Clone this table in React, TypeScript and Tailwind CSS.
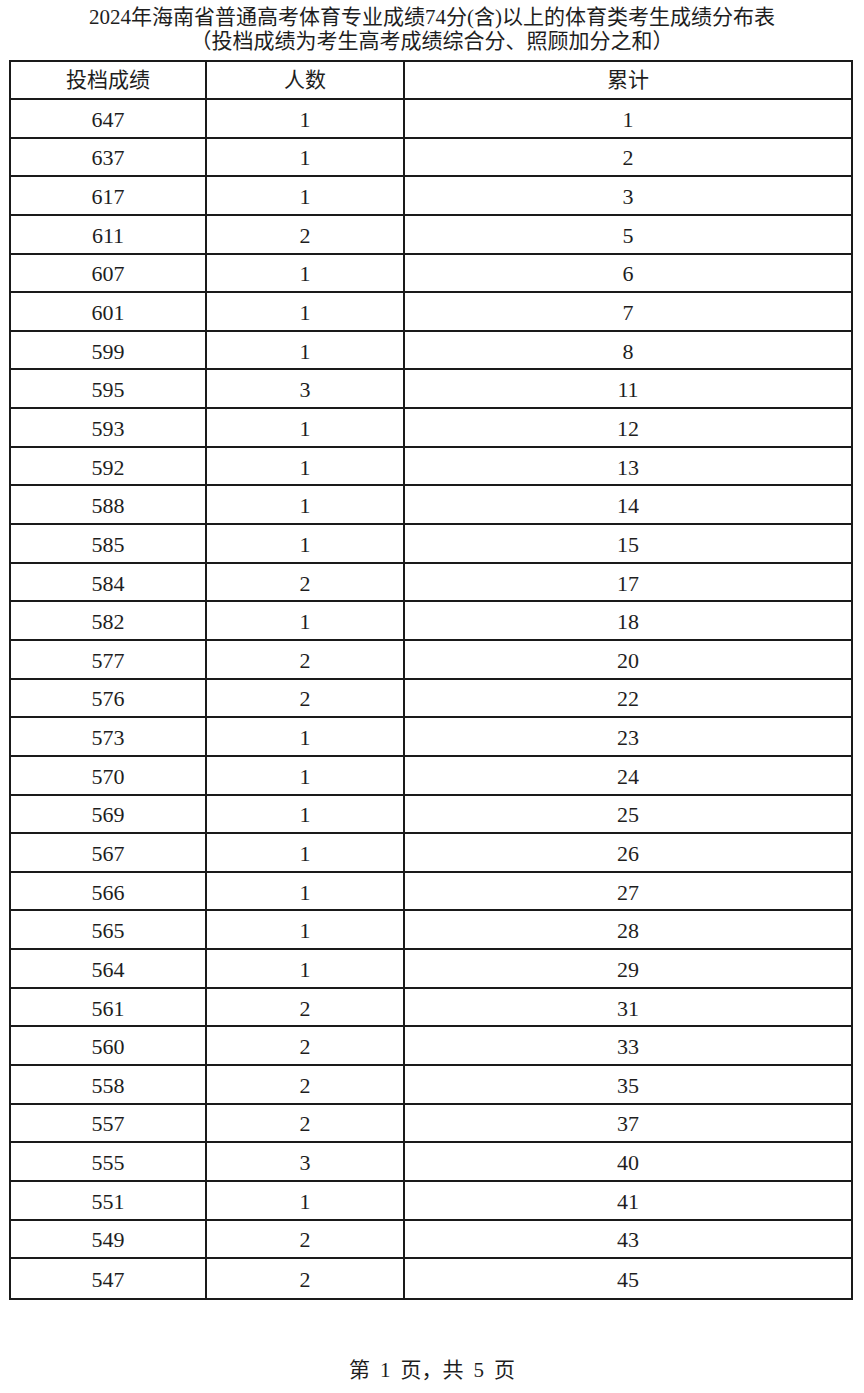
import React from "react";

const rows: [string, string, string][] = [
  ["647", "1", "1"],
  ["637", "1", "2"],
  ["617", "1", "3"],
  ["611", "2", "5"],
  ["607", "1", "6"],
  ["601", "1", "7"],
  ["599", "1", "8"],
  ["595", "3", "11"],
  ["593", "1", "12"],
  ["592", "1", "13"],
  ["588", "1", "14"],
  ["585", "1", "15"],
  ["584", "2", "17"],
  ["582", "1", "18"],
  ["577", "2", "20"],
  ["576", "2", "22"],
  ["573", "1", "23"],
  ["570", "1", "24"],
  ["569", "1", "25"],
  ["567", "1", "26"],
  ["566", "1", "27"],
  ["565", "1", "28"],
  ["564", "1", "29"],
  ["561", "2", "31"],
  ["560", "2", "33"],
  ["558", "2", "35"],
  ["557", "2", "37"],
  ["555", "3", "40"],
  ["551", "1", "41"],
  ["549", "2", "43"],
  ["547", "2", "45"],
];

export default function App() {
  return (
    <div
      className="w-[864px] h-[1393px] bg-white text-[#1e1e1e] overflow-hidden"
      style={{ fontFamily: '"Liberation Serif", "Noto Sans CJK SC", serif' }}
    >
      <div className="pt-[5px] text-center text-[21px] leading-[24px]">
        <div>2024年海南省普通高考体育专业成绩74分(含)以上的体育类考生成绩分布表</div>
        <div>（投档成绩为考生高考成绩综合分、照顾加分之和）</div>
      </div>
      <div className="ml-[9px] mt-[7px] w-[844px] border-2 border-[#1a1a1a]">
        <div className="flex h-[38px] border-b-2 border-[#1a1a1a] text-[21px]">
          <div className="w-[196px] flex items-center justify-center border-r-2 border-[#1a1a1a] pt-[2px]">投档成绩</div>
          <div className="w-[198px] flex items-center justify-center border-r-2 border-[#1a1a1a] pt-[2px]">人数</div>
          <div className="flex-1 flex items-center justify-center pt-[2px]">累计</div>
        </div>
        {rows.map((r, i) => (
          <div
            key={i}
            className={`flex h-[38.65px] text-[22px] ${i < rows.length - 1 ? "border-b-2 border-[#1a1a1a]" : ""}`}
          >
            <div className="w-[196px] flex items-center justify-center border-r-2 border-[#1a1a1a] pt-[2px]">{r[0]}</div>
            <div className="w-[198px] flex items-center justify-center border-r-2 border-[#1a1a1a] pt-[2px]">{r[1]}</div>
            <div className="flex-1 flex items-center justify-center pt-[2px]">{r[2]}</div>
          </div>
        ))}
      </div>
      <div className="mt-[58px] flex justify-center items-baseline gap-[10px] text-[21px] leading-[24px]">
        <span>第</span>
        <span>1</span>
        <span>页，共</span>
        <span>5</span>
        <span>页</span>
      </div>
    </div>
  );
}
